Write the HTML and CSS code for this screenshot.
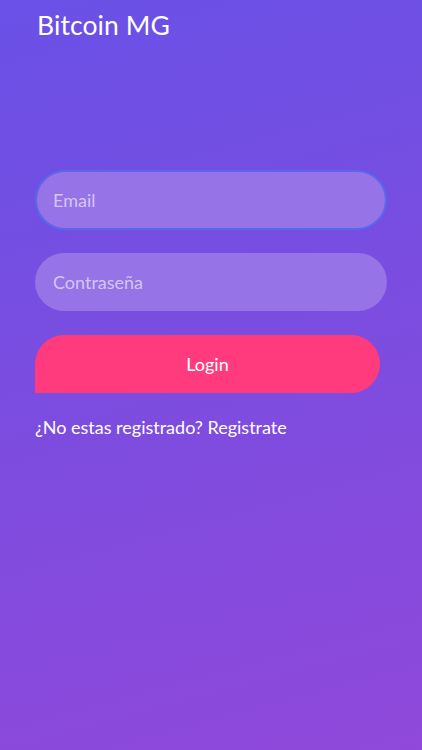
FILE: index.html
```html
<!DOCTYPE html>
<html lang="es">
<head>
  <meta charset="UTF-8" />
  <meta name="viewport" content="width=device-width, initial-scale=1.0"/>
  <title>Bitcoin MG</title>
  <link rel="stylesheet" href="styles.css">
</head>
<body>
  <header class="app-header">
    <h1 class="app-title">Bitcoin MG</h1>
  </header>

  <form class="login-form" onsubmit="return false;">
    <input class="field field-focus" type="email" placeholder="Email" />
    <input class="field" type="password" placeholder="Contraseña" />
    <button class="login-btn" type="submit">Login</button>
    <a class="register-link" href="#">¿No estas registrado? Registrate</a>
  </form>
</body>
</html>
```

FILE: styles.css
```css
html, body {
  height: 100%;
}

body {
  margin: 0;
  font-family: Lato, 'Open Sans', sans-serif;
  background: linear-gradient(165deg, #6a51e7 0%, #7a4de0 45%, #8f48da 100%);
  color: #fff;
}

.app-header {
  padding: 8px 37px 0;
}

.app-title {
  margin: 0;
  font-size: 26.5px;
  font-weight: 400;
  line-height: 34px;
  letter-spacing: 0.1px;
}

.login-form {
  display: flex;
  flex-direction: column;
  padding: 128px 35px 0;
}

.field {
  box-sizing: border-box;
  width: 352px;
  height: 58px;
  padding: 0 16px;
  border: 2px solid transparent;
  border-radius: 30px;
  background: #9673e6;
  font-family: inherit;
  font-size: 18px;
  color: #fff;
  outline: none;
  margin-bottom: 23px;
}

.field-focus {
  height: 60px;
  border-color: #5c67e8;
  box-shadow: 0 0 2px rgba(80, 100, 240, 0.6);
}

.field::placeholder {
  color: #d5c5f5;
}

.login-btn {
  width: 345px;
  height: 58px;
  margin-top: 1px;
  border: none;
  border-radius: 30px 30px 30px 0;
  background: #ff3b7d;
  color: #fff;
  font-family: inherit;
  font-size: 18px;
  cursor: pointer;
}

.register-link {
  margin-top: 23px;
  color: #fff;
  font-size: 18px;
  text-decoration: none;
}
```
